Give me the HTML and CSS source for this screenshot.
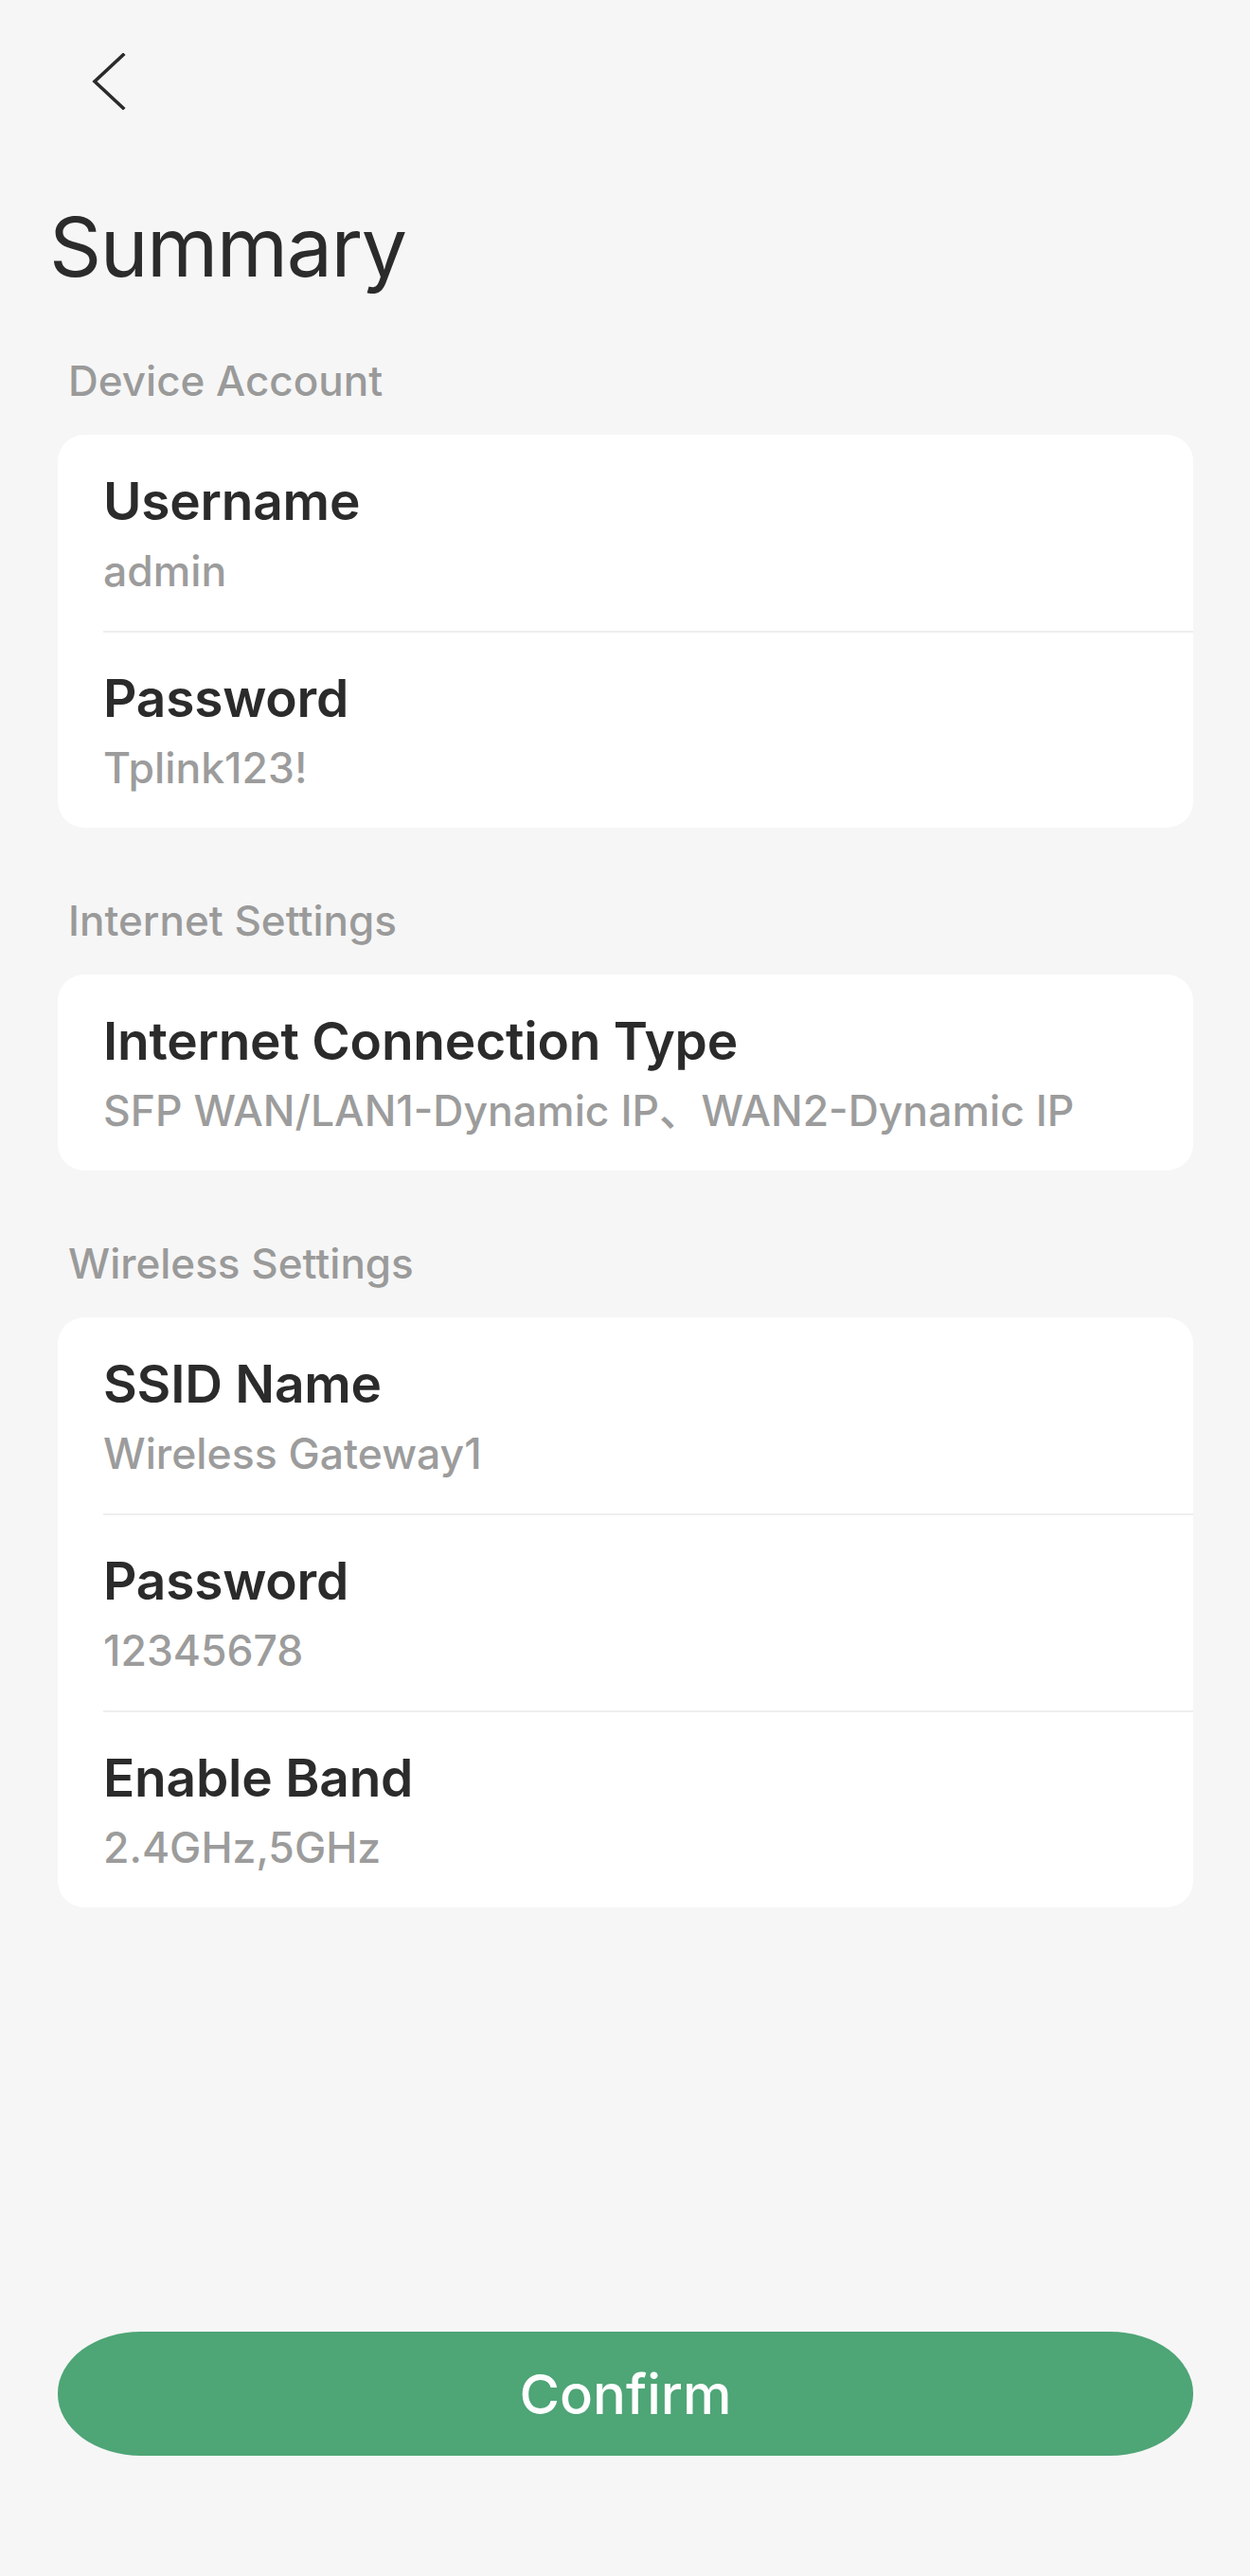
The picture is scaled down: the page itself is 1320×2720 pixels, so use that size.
FILE: index.html
```html
<!DOCTYPE html>
<html lang="en">
<head>
<meta charset="utf-8">
<title>Summary</title>
<link rel="stylesheet" href="styles.css">
</head>
<body>
<div class="page">
  <header class="nav">
    <button class="back" aria-label="Back">
      <svg width="36" height="60" viewBox="0 0 36 60" fill="none">
        <path d="M33 2 L3 30 L33 58" stroke="#2b2b2b" stroke-width="3.6" stroke-linecap="square" stroke-linejoin="miter"/>
      </svg>
    </button>
  </header>
  <h1 class="title">Summary</h1>

  <section class="section">
    <div class="section-label">Device Account</div>
    <div class="card">
      <div class="row">
        <div class="row-title">Username</div>
        <div class="row-value">admin</div>
      </div>
      <div class="row">
        <div class="row-title">Password</div>
        <div class="row-value">Tplink123!</div>
      </div>
    </div>
  </section>

  <section class="section">
    <div class="section-label">Internet Settings</div>
    <div class="card">
      <div class="row">
        <div class="row-title">Internet Connection Type</div>
        <div class="row-value">SFP WAN/LAN1-Dynamic IP、WAN2-Dynamic IP</div>
      </div>
    </div>
  </section>

  <section class="section">
    <div class="section-label">Wireless Settings</div>
    <div class="card">
      <div class="row">
        <div class="row-title">SSID Name</div>
        <div class="row-value">Wireless Gateway1</div>
      </div>
      <div class="row">
        <div class="row-title">Password</div>
        <div class="row-value">12345678</div>
      </div>
      <div class="row">
        <div class="row-title">Enable Band</div>
        <div class="row-value">2.4GHz,5GHz</div>
      </div>
    </div>
  </section>

  <footer class="footer">
    <button class="confirm">Confirm</button>
  </footer>
</div>
</body>
</html>
```

FILE: styles.css
```css
* {
  box-sizing: border-box;
}

html, body {
  margin: 0;
  padding: 0;
  background: #f6f6f6;
}

body {
  font-family: Inter, "Noto Sans CJK SC", "Noto Sans", sans-serif;
  color: #2b2b2b;
}

.page {
  min-height: 2720px;
  display: flex;
  flex-direction: column;
  padding: 0 60px 0 61px;
}

.nav {
  height: 220px;
  padding-top: 56px;
  padding-left: 36px;
}

.back {
  display: block;
  padding: 0;
  margin: 0;
  border: 0;
  background: none;
  width: 36px;
  height: 60px;
}

.back svg {
  display: block;
}

.title {
  margin: 0 0 0 -9px;
  font-size: 86px;
  line-height: 82px;
  font-weight: 400;
  letter-spacing: -1.5px;
  color: #2b2b2b;
}

.section {
  display: flex;
  flex-direction: column;
}

.section-label {
  margin: 68px 0 27px 11px;
  height: 60px;
  font-size: 44px;
  line-height: 60px;
  font-weight: 500;
  color: #9a9a9a;
}

.section:first-of-type .section-label {
  margin-top: 70px;
}

.card {
  background: #ffffff;
  border-radius: 28px;
  overflow: hidden;
}

.row {
  margin-left: 48px;
  padding: 35px 0 35px 0;
}

.row + .row {
  border-top: 2px solid #eeeeee;
  padding-top: 34px;
}

.row-title {
  font-size: 55px;
  line-height: 70px;
  font-weight: 600;
  letter-spacing: -0.2px;
  color: #2b2b2b;
}

.row-value {
  margin-top: 11px;
  font-size: 44.5px;
  line-height: 56px;
  font-weight: 500;
  color: #9c9c9c;
}

.footer {
  margin-top: auto;
  padding-bottom: 127px;
}

.confirm {
  display: block;
  width: 100%;
  height: 131px;
  border: 0;
  border-radius: 88px / 65px;
  background: #4ea576;
  color: #ffffff;
  font-family: Inter, "Noto Sans", sans-serif;
  font-size: 58px;
  font-weight: 500;
  padding: 0;
}
```
